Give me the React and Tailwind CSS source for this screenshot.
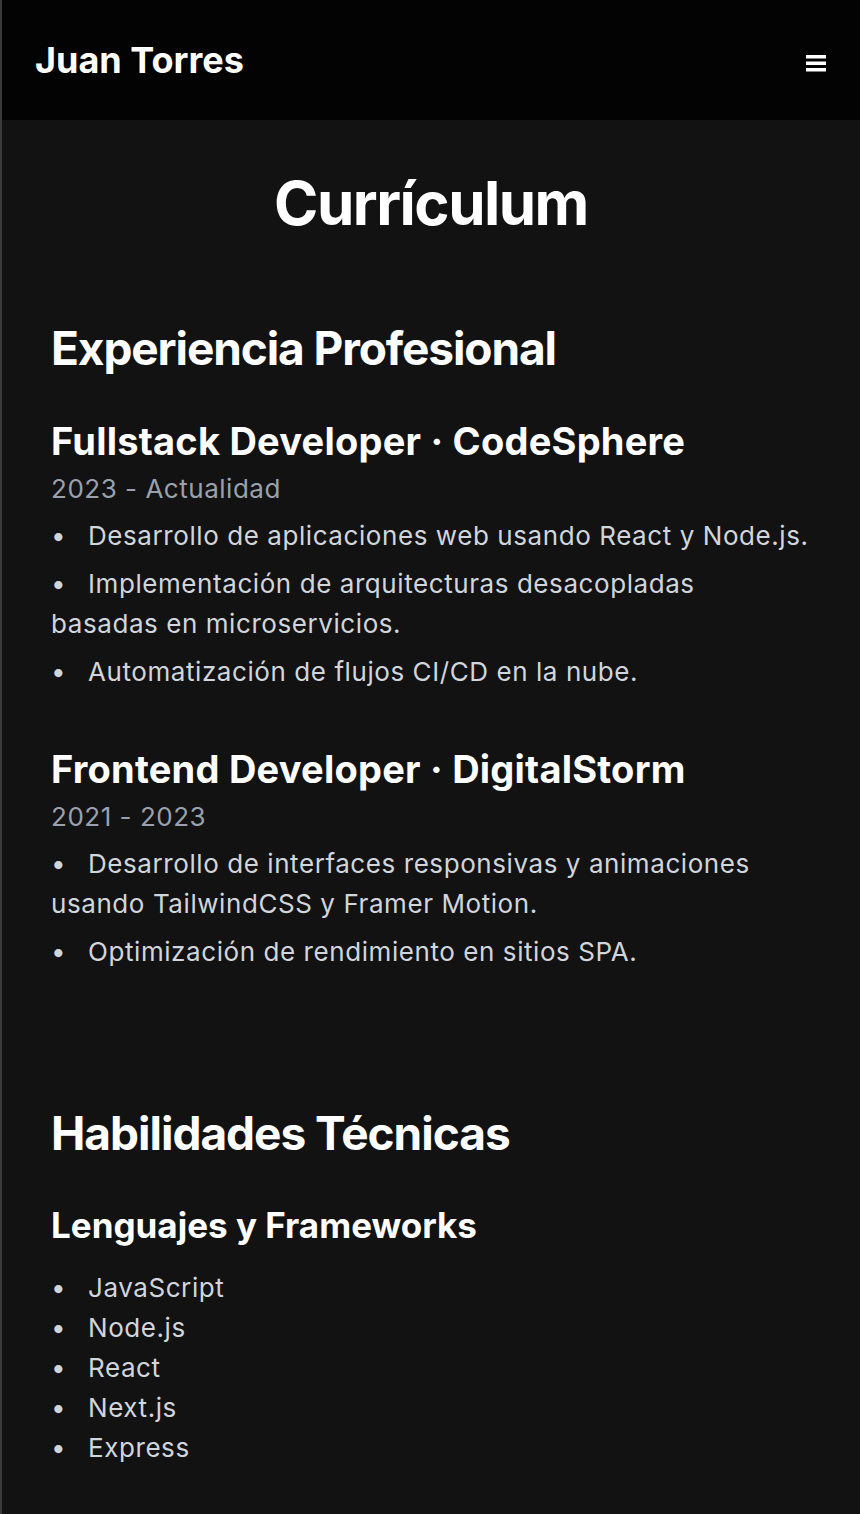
const jobs = [
  {
    title: 'Fullstack Developer · CodeSphere',
    period: '2023 - Actualidad',
    tasks: [
      'Desarrollo de aplicaciones web usando React y Node.js.',
      'Implementación de arquitecturas desacopladas basadas\u00a0en microservicios.',
      'Automatización de flujos CI/CD en la nube.',
    ],
  },
  {
    title: 'Frontend Developer · DigitalStorm',
    period: '2021 - 2023',
    tasks: [
      'Desarrollo de interfaces responsivas y animaciones usando TailwindCSS y Framer Motion.',
      'Optimización de rendimiento en sitios SPA.',
    ],
  },
];

const skills = ['JavaScript', 'Node.js', 'React', 'Next.js', 'Express'];

function Bullet() {
  return <span className="inline-block w-[37px] tracking-normal text-gray-300">•</span>;
}

export default function App() {
  return (
    <div className="min-h-[1514px] border-l-2 border-[#3a3a3a] bg-[#121212] font-['Inter','Noto_Sans',sans-serif] text-white">
      <header className="flex h-[120px] items-center justify-between bg-[#030303] pl-[33px] pr-[34px]">
        <span className="text-[36px] leading-none font-bold">Juan Torres</span>
        <svg width="20" height="17" viewBox="0 0 20 17" className="mt-[6px]">
          <rect x="0" y="0" width="20" height="3.5" fill="white" />
          <rect x="0" y="6.5" width="20" height="3.5" fill="white" />
          <rect x="0" y="13" width="20" height="3.5" fill="white" />
        </svg>
      </header>

      <main className="px-[49px] pt-[53px] pb-[46px]">
        <h1 className="text-center text-[60px] leading-[60px] font-bold tracking-[-0.025em]">Currículum</h1>

        <section className="mt-[89px]">
          <h2 className="text-[46px] leading-[52px] font-bold tracking-[-0.024em]">Experiencia Profesional</h2>
          {jobs.map((job, i) => (
            <div key={job.title} className={i === 0 ? 'mt-[45px]' : 'mt-[55px]'}>
              <h3 className="text-[38px] leading-[44px] font-bold tracking-[0.006em]">{job.title}</h3>
              <p className="mt-[6px] text-[26px] leading-[40px] tracking-[0.02em] text-gray-400">{job.period}</p>
              <ul className="mt-[7px] space-y-2 text-[26px] leading-[40px] tracking-[0.022em] text-gray-300">
                {job.tasks.map((t) => (
                  <li key={t}>
                    <Bullet />
                    {t}
                  </li>
                ))}
              </ul>
            </div>
          ))}
        </section>

        <section className="mt-[135px]">
          <h2 className="text-[46px] leading-[52px] font-bold tracking-[-0.022em]">Habilidades Técnicas</h2>
          <h3 className="mt-[47px] text-[35px] leading-[38px] font-bold">Lenguajes y Frameworks</h3>
          <ul className="mt-[24px] text-[26px] leading-[40px] tracking-[0.022em] text-gray-300">
            {skills.map((s) => (
              <li key={s}>
                <Bullet />
                {s}
              </li>
            ))}
          </ul>
        </section>
      </main>
    </div>
  );
}
